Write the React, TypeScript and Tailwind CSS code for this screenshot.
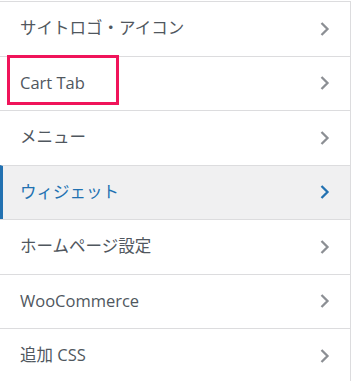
const items = [
  "サイトロゴ・アイコン",
  "Cart Tab",
  "メニュー",
  "ウィジェット",
  "ホームページ設定",
  "WooCommerce",
  "追加 CSS",
];

function Chevron({ active }: { active: boolean }) {
  return (
    <svg width="11" height="16" viewBox="0 0 11 16" className={active ? "text-[#2271b1]" : "text-[#8c8f94]"}>
      <path d="M2.5 2l6 6-6 6" fill="none" stroke="currentColor" strokeWidth="2.3" />
    </svg>
  );
}

export default function App() {
  return (
    <div className="w-[352px] h-[381px] bg-white pt-px overflow-hidden font-['Open_Sans','Noto_Sans_CJK_JP',sans-serif]">
      <div className="w-[351px] border-r border-[#dcdcde]">
        {items.map((label, i) => {
          const active = i === 3;
          return (
            <div
              key={label}
              className={
                "relative flex items-center justify-between h-[54.5px] border-t border-[#dcdcde] pr-[20px] " +
                (active ? "bg-[#f0f0f1] border-l-[3px] border-l-[#2271b1] pl-[17px]" : "pl-5")
              }
            >
              <span className={"text-[16.5px] " + (active ? "text-[#2271b1]" : "text-[#50575e]")}>{label}</span>
              <Chevron active={active} />
              {i === 1 && (
                <div className="absolute left-[7px] top-[-1.5px] w-[112px] h-[50px] border-[3px] border-[#f0145a]" />
              )}
            </div>
          );
        })}
      </div>
    </div>
  );
}
